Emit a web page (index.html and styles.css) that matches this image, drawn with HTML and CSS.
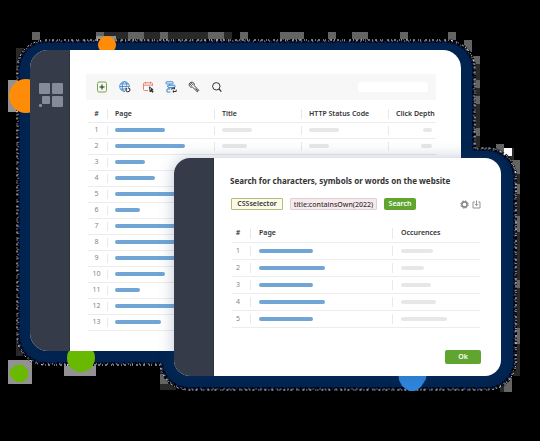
FILE: index.html
```html
<!DOCTYPE html>
<html lang="en">
<head>
<meta charset="utf-8">
<title>Website page search</title>
<link rel="stylesheet" href="styles.css">
</head>
<body>
<main class="scene">
  <svg class="backdrop" width="540" height="441" viewBox="0 0 540 441" aria-hidden="true">
    <g fill="#292929">
      <path d="M96 32h136v10H96zM72 40h24v8H72zM56 48h16v8H56zM16 48h16v24H16zM224 40h24v8h-24zM464 56h16v98h-16zM472 148h42v12h-42zM508 160h12v216h-12zM500 376h12v16h-12zM160 366h16v24h-16zM16 340h8v16h-8z"/>
    </g>
    <g fill="#646464">
      <path d="M32 32h8v8h-8zM96 32h8v8h-8zM128 32h16v8h-16zM160 32h8v8h-8zM208 32h16v8h-16zM240 32h8v8h-8zM280 32h24v8h-24zM328 32h8v8h-8zM352 32h16v8h-16zM400 32h8v8h-8zM448 32h8v8h-8zM464 40h8v12h-8zM472 56h8v8h-8zM472 80h8v8h-8zM472 96h8v8h-8zM472 128h8v8h-8zM496 144h8v8h-8zM512 160h8v14h-8zM512 184h8v10h-8zM512 216h8v16h-8zM512 280h8v8h-8zM512 328h8v16h-8zM504 376h8v16h-8zM160 374h8v10h-8z"/>
    </g>
    <path fill="#929292" d="M8 80h24v32H8zM8 360h24v24H8zM64 360h32v16H64zM96 36h20v12H96z"/>
    <path fill="#fff" d="M504 148h8v8h-8z"/>
    <g fill="#002350">
      <rect x="18" y="41" width="456" height="323" rx="28"/>
      <rect x="161" y="149" width="354" height="240" rx="28"/>
    </g>
    <g fill="none">
      <path class="edge black" d="M161 364H46a28 28 0 0 1-28-28V69a28 28 0 0 1 28-28h400a28 28 0 0 1 28 28v80h13a28 28 0 0 1 28 28v184a28 28 0 0 1-28 28H189a28 28 0 0 1-28-25z"/>
      <path class="edge blue" d="M161 363H46a28 28 0 0 1-27-28V69a28 28 0 0 1 28-27h400a28 28 0 0 1 26 28v80h13a28 28 0 0 1 28 28v184a28 28 0 0 1-28 27H189a28 28 0 0 1-27-25z"/>
      <path class="edge white" d="M160 365H46a29 29 0 0 1-29-29V69a29 29 0 0 1 29-29h400a29 29 0 0 1 29 29v79h12a29 29 0 0 1 29 29v184a29 29 0 0 1-29 29H189a29 29 0 0 1-29-25z"/>
      <path class="edge fleck" d="M161 364H46a28 28 0 0 1-28-28V69a28 28 0 0 1 28-28h400a28 28 0 0 1 28 28v80h13a28 28 0 0 1 28 28v184a28 28 0 0 1-28 28H189a28 28 0 0 1-28-25z"/>
    </g>
    <g fill="#ff8c08"><circle cx="26" cy="96" r="17"/><circle cx="107" cy="45" r="9"/></g>
    <g fill="#69b900"><circle cx="81" cy="358" r="14"/><path d="M16 365h7l5 5v7l-5 5h-7l-6-6v-6z"/></g>
    <path fill="#2f86df" d="M398 370h29l-1 9-5 8-6 4h-6l-7-5-3-6z"/>
  </svg>

  <section class="window window-back">
    <div class="sidebar">
      <svg class="logo" width="24" height="25" viewBox="0 0 24 25" aria-hidden="true">
        <rect width="11" height="11" rx="1"/><rect x="13" width="11" height="11" rx="1"/>
        <rect x="13" y="13" width="11" height="11" rx="1"/><rect x="3" y="13" width="8" height="8" rx="1"/><rect y="21" width="3" height="3" rx="1"/>
      </svg>
    </div>
    <div class="content">
      <div class="toolbar">
        <button class="tool" aria-label="Add"><svg viewBox="0 0 12 12"><rect x="1.5" y="1" width="9" height="10" rx="1.5" fill="#f3f9ec" stroke="#78a650"/><path d="M6 3.5v5M3.5 6h5" stroke="#222"/></svg></button>
        <button class="tool" aria-label="Refresh site"><svg viewBox="0 0 12 12"><g stroke="#3e86d2" stroke-width=".9"><circle cx="5.5" cy="5.5" r="4.8"/><ellipse cx="5.5" cy="5.5" rx="2.2" ry="4.8"/><path d="M.7 5.5h9.6M1.5 3h8M1.5 8h8"/></g><circle cx="8.8" cy="8.8" r="3" fill="#f7f7f7" stroke="none"/><path d="M7 7.8v2.1l1.8 1 2-1V7.7L9 6.8M7 6.7v1.2h1.2" stroke="#222"/></svg></button>
        <button class="tool" aria-label="Scheduled pages"><svg viewBox="0 0 12 12"><path d="M6 9.5H2.5a1 1 0 0 1-1-1V2.8a1 1 0 0 1 1-1h7a1 1 0 0 1 1 1v2M1.5 4.2h9M3.5.8v1.8M8.5.8v1.8" stroke="#ec806c"/><path d="M7.3 5.8 8 11l1.2-1 1.2 1.5.8-.8-1-1.4 1-.7z" fill="#333" stroke="#222" stroke-width=".6"/><path d="M8.4 7.2v1.7" stroke="#fff" stroke-width=".7"/></svg></button>
        <button class="tool" aria-label="Refresh structure"><svg viewBox="0 0 12 12"><g stroke="#3e86d2"><rect x="1" y=".8" width="7" height="2.2" rx=".5"/><rect x="3" y="4.2" width="7" height="2.2" rx=".5"/><path d="M5.5 8H2v3h3.5M2 5.3h1M4.5 3v1.2M4 6.4V8"/></g><path d="M6.8 8.8V7.3h3M8.8 6.3l1.2 1-1.2 1M11.2 8.7v1.8H8M9 9.5l-1.2 1 1.2 1" stroke="#222" stroke-width=".9"/></svg></button>
        <button class="tool" aria-label="Settings"><svg viewBox="0 0 12 12"><path d="M4.5 1.3a2.6 2.6 0 0 0-3.2 3.2 2.7 2.7 0 0 0 3.3 1.7l4.7 4.6 1.5-1.5-4.6-4.7a2.6 2.6 0 0 0-1.7-3.3zM1.4 2.5l2 2 1.1-1.1-1.7-2M7.5 7.5 9.8 9.8" stroke="#333" stroke-width=".9"/></svg></button>
        <button class="tool" aria-label="Search"><svg viewBox="0 0 12 12"><circle cx="5.3" cy="5.3" r="3.7" stroke="#333"/><path d="m8 8 2.4 2.6" stroke="#333" stroke-width="1.2"/></svg></button>
        <input class="filter" type="search" aria-label="Filter pages">
      </div>
      <table class="grid pages">
        <colgroup><col class="c-num"><col class="c-page"><col class="c-mid"><col class="c-mid"><col class="c-depth"></colgroup>
        <thead><tr><th>#</th><th>Page</th><th>Title</th><th>HTTP Status Code</th><th>Click Depth</th></tr></thead>
        <tbody>
          <tr><td>1</td><td><i class="bar" style="width:50px"></i></td><td><i class="bar mute" style="width:30px"></i></td><td><i class="bar mute" style="width:30px"></i></td><td><i class="bar mute" style="width:9px"></i></td></tr>
          <tr><td>2</td><td><i class="bar" style="width:70px"></i></td><td><i class="bar mute" style="width:25px"></i></td><td><i class="bar mute" style="width:20px"></i></td><td><i class="bar mute" style="width:11px"></i></td></tr>
          <tr><td>3</td><td><i class="bar" style="width:30px"></i></td><td></td><td></td><td></td></tr>
          <tr><td>4</td><td><i class="bar" style="width:40px"></i></td><td></td><td></td><td></td></tr>
          <tr><td>5</td><td><i class="bar" style="width:70px"></i></td><td></td><td></td><td></td></tr>
          <tr><td>6</td><td><i class="bar" style="width:25px"></i></td><td></td><td></td><td></td></tr>
          <tr><td>7</td><td><i class="bar" style="width:70px"></i></td><td></td><td></td><td></td></tr>
          <tr><td>8</td><td><i class="bar" style="width:70px"></i></td><td></td><td></td><td></td></tr>
          <tr><td>9</td><td><i class="bar" style="width:70px"></i></td><td></td><td></td><td></td></tr>
          <tr><td>10</td><td><i class="bar" style="width:50px"></i></td><td></td><td></td><td></td></tr>
          <tr><td>11</td><td><i class="bar" style="width:25px"></i></td><td></td><td></td><td></td></tr>
          <tr><td>12</td><td><i class="bar" style="width:70px"></i></td><td></td><td></td><td></td></tr>
          <tr><td>13</td><td><i class="bar" style="width:46px"></i></td><td></td><td></td><td></td></tr>
        </tbody>
      </table>
    </div>
  </section>

  <section class="window window-front">
    <div class="sidebar"></div>
    <div class="content">
      <h1>Search for characters, symbols or words on the website</h1>
      <form class="query">
        <button type="button" class="chip selector">CSSselector</button>
        <input class="chip rule" aria-label="Search rule" value="title:containsOwn(2022)">
        <button type="button" class="primary">Search</button>
        <span class="actions">
          <button type="button" class="mini" aria-label="Options"><svg viewBox="0 0 9 9"><circle cx="4.5" cy="4.5" r="2.6" stroke="#888" stroke-width="1.6"/><circle cx="4.5" cy="4.5" r="3.8" stroke="#888" stroke-width=".9" stroke-dasharray="1.5 1.5"/></svg></button>
          <button type="button" class="mini" aria-label="Download"><svg viewBox="0 0 9 9"><path d="M2.8 2H1v6h7V2H6.2M4.5.5v5M2.8 4l1.7 1.7L6.2 4" stroke="#888" stroke-width=".9"/></svg></button>
        </span>
      </form>
      <table class="grid results">
        <colgroup><col class="c-num"><col class="c-page"><col></colgroup>
        <thead><tr><th>#</th><th>Page</th><th>Occurences</th></tr></thead>
        <tbody>
          <tr><td>1</td><td><i class="bar" style="width:54px"></i></td><td><i class="bar mute" style="width:32px"></i></td></tr>
          <tr><td>2</td><td><i class="bar" style="width:66px"></i></td><td><i class="bar mute" style="width:23px"></i></td></tr>
          <tr><td>3</td><td><i class="bar" style="width:54px"></i></td><td><i class="bar mute" style="width:30px"></i></td></tr>
          <tr><td>4</td><td><i class="bar" style="width:66px"></i></td><td><i class="bar mute" style="width:35px"></i></td></tr>
          <tr><td>5</td><td><i class="bar" style="width:54px"></i></td><td><i class="bar mute" style="width:46px"></i></td></tr>
        </tbody>
      </table>
      <div class="footer"><button class="primary ok">Ok</button></div>
    </div>
  </section>
</main>
</body>
</html>
```
FILE: styles.css
```css
* { box-sizing: border-box; }
body {
  margin: 0;
  background: #000;
  color: #343434;
  font: 7px/10px "Noto Sans", "Open Sans", sans-serif;
}
button, input { font: inherit; color: inherit; margin: 0; padding: 0; border: 0; background: none; }
svg { display: block; fill: none; }

.scene { position: relative; min-height: 100vh; overflow: hidden; }
.backdrop { position: absolute; top: 0; left: 0; }
.edge { stroke-width: 2; }
.edge.black { stroke: #000; stroke-width: 4; stroke-dasharray: 2 1 1 2 3 1 1 1; }
.edge.blue { stroke: #10104a; stroke-dasharray: 1 3 2 2 1 4; }
.edge.white { stroke: #eee; stroke-width: 1; stroke-dasharray: 1 2 2 3 1 1 1 4 2 2; }
.edge.fleck { stroke: #b8b8c8; stroke-width: 1; stroke-dasharray: 1 4 1 6 1 3; }

.window { position: absolute; display: flex; background: #fff; overflow: hidden; }
.window-back { top: 50px; left: 30px; right: 79px; border-radius: 18px 18px 0 18px; }
.window-front { top: 158px; left: 174px; right: 39px; border-radius: 16px; box-shadow: 0 0 16px rgba(40, 65, 110, .3); }
.sidebar { flex: 0 0 40px; background: #353b48; border-right: 1px solid #2c323e; }
.logo { margin: 33px 0 0 9px; fill: #848b99; }
.content { flex: 1; min-width: 0; }
.window-back .content { padding: 24px 25px 20px 16px; }
.window-front .content { padding: 18px 20px 12px 16px; }

.toolbar { display: flex; align-items: center; gap: 11px; height: 26px; padding: 0 8px 0 10px; background: #f7f7f7; }
.tool, .tool svg { width: 12px; height: 12px; }
.filter { width: 70px; height: 10px; margin-left: auto; border-radius: 3px; background: #fff; }

.grid { width: 100%; table-layout: fixed; border-collapse: collapse; }
.grid th, .grid td { position: relative; height: 16px; padding: 0 0 0 8px; text-align: left; border-bottom: 1px solid #ececec; }
.grid th { font-weight: 600; white-space: nowrap; }
.grid td { color: #858585; }
.grid th:first-child, .grid td:first-child { padding: 0 2px 0 0; text-align: center; }
.grid th + th::before, .grid td + td::before { content: ""; position: absolute; left: 0; top: 3px; bottom: 3px; border-left: 1px solid #e9e9e9; }
.bar { display: block; height: 4px; border-radius: 2px; background: #70a5d5; }
.bar.mute { background: #e7e7e7; }
.pages { width: calc(100% - 2px); margin: 6px 0 0 2px; }
.pages .c-num { width: 19px; }
.pages .c-page { width: 107px; }
.pages .c-mid { width: 87px; }
.pages th:last-child, .pages td:last-child { padding-right: 4px; text-align: right; }
.pages td:last-child .bar { margin-left: auto; }

h1 { margin: 0; font-size: 8px; line-height: 10px; font-weight: 700; white-space: nowrap; }
.query { display: flex; gap: 7px; margin: 12px 0 0; align-items: center; }
.chip { height: 12px; border: 1px solid #e0d0d4; border-radius: 1px; text-align: center; line-height: 10px; font-weight: 500; }
.selector { width: 52px; margin-left: 1px; border-color: #b9ba80; background: #fbfbe8; font-weight: 600; }
.rule { width: 87px; background: #f7eaed; }
.primary { width: 32px; height: 12px; border-radius: 2px; background: #60a530; color: #fff; font-weight: 600; line-height: 10px; }
.actions { display: flex; gap: 3px; margin-left: auto; }
.mini, .mini svg { width: 9px; height: 9px; }
.results { width: calc(100% - 3px); margin: 15px 0 0 2px; }
.results th, .results td { height: 17px; padding-left: 9px; }
.results th:first-child, .results td:first-child { padding-right: 6px; }
.results .c-num { width: 18px; }
.results .c-page { width: 142px; }
.footer { display: flex; justify-content: flex-end; margin-top: 22px; }
.ok { width: 36px; height: 14px; }
```
